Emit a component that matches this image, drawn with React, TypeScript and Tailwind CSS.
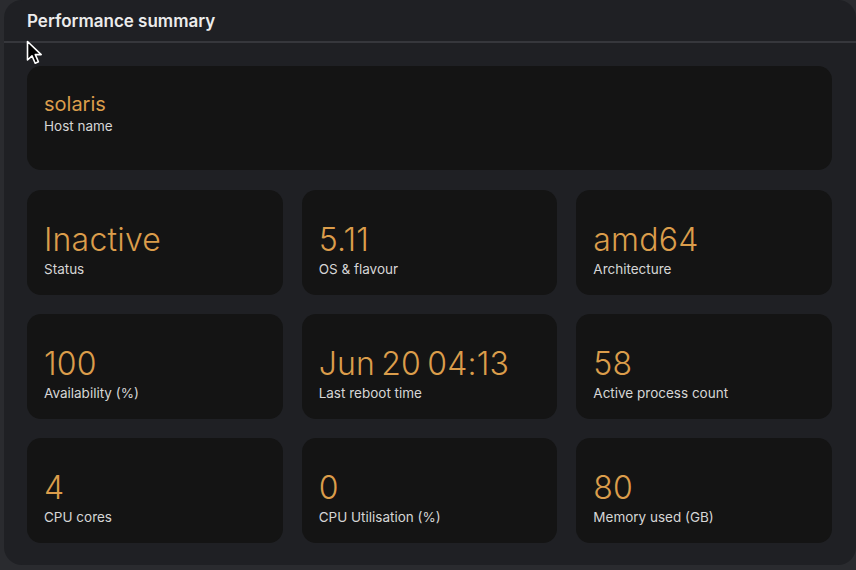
const stats = [
  { value: 'Inactive', label: 'Status' },
  { value: '5.11', label: 'OS & flavour' },
  { value: 'amd64', label: 'Architecture' },
  { value: '100', label: 'Availability (%)' },
  { value: 'Jun 20 04:13', label: 'Last reboot time' },
  { value: '58', label: 'Active process count' },
  { value: '4', label: 'CPU cores' },
  { value: '0', label: 'CPU Utilisation (%)' },
  { value: '80', label: 'Memory used (GB)' },
]

function Cursor() {
  return (
    <svg
      className="absolute left-[26px] top-[40px]"
      width="18"
      height="26"
      viewBox="0 0 18 26"
    >
      <path
        d="M1.5 1.5 L1.5 20 L6 15.8 L9.2 23.2 L12.4 21.8 L9.3 14.6 L15.2 14.6 Z"
        fill="#000"
        stroke="#fff"
        strokeWidth="1.6"
        strokeLinejoin="round"
      />
    </svg>
  )
}

export default function App() {
  return (
    <div
      className="relative h-[570px] w-[856px] bg-[#2a2b2f] pl-[4px]"
      style={{ fontFamily: 'Inter, "Noto Sans", sans-serif' }}
    >
      <div className="h-[565px] rounded-[18px] bg-[#1f2024]">
        <div className="flex h-[41px] items-center pl-[23px] pt-[2px]">
          <h2 className="text-[17px] font-semibold text-[#ececec]">Performance summary</h2>
        </div>
        <div className="h-[2px] bg-[#36373c]" />

        <div className="pl-[23px] pr-[24px] pt-[23px]">
          <div className="h-[104px] rounded-[14px] bg-[#141414] px-[17px] pt-[25px]">
            <div className="text-[20px] leading-[26px] text-[#db9d4b]">solaris</div>
            <div className="text-[13.5px] leading-[18px] text-[#d6d6d6]">Host name</div>
          </div>

          <div className="mt-[20px] grid grid-cols-3 gap-x-[19px] gap-y-[19px]">
            {stats.map((s) => (
              <div key={s.label} className="h-[105px] rounded-[14px] bg-[#141414] px-[17px] pt-[31px]">
                <div className="text-[32px] font-light leading-[38px] tracking-[0.2px] text-[#db9d4b] [word-spacing:-3px]">
                  {s.value}
                </div>
                <div className="mt-[1px] text-[13.5px] leading-[18px] text-[#d6d6d6]">{s.label}</div>
              </div>
            ))}
          </div>
        </div>
      </div>
      <Cursor />
    </div>
  )
}
